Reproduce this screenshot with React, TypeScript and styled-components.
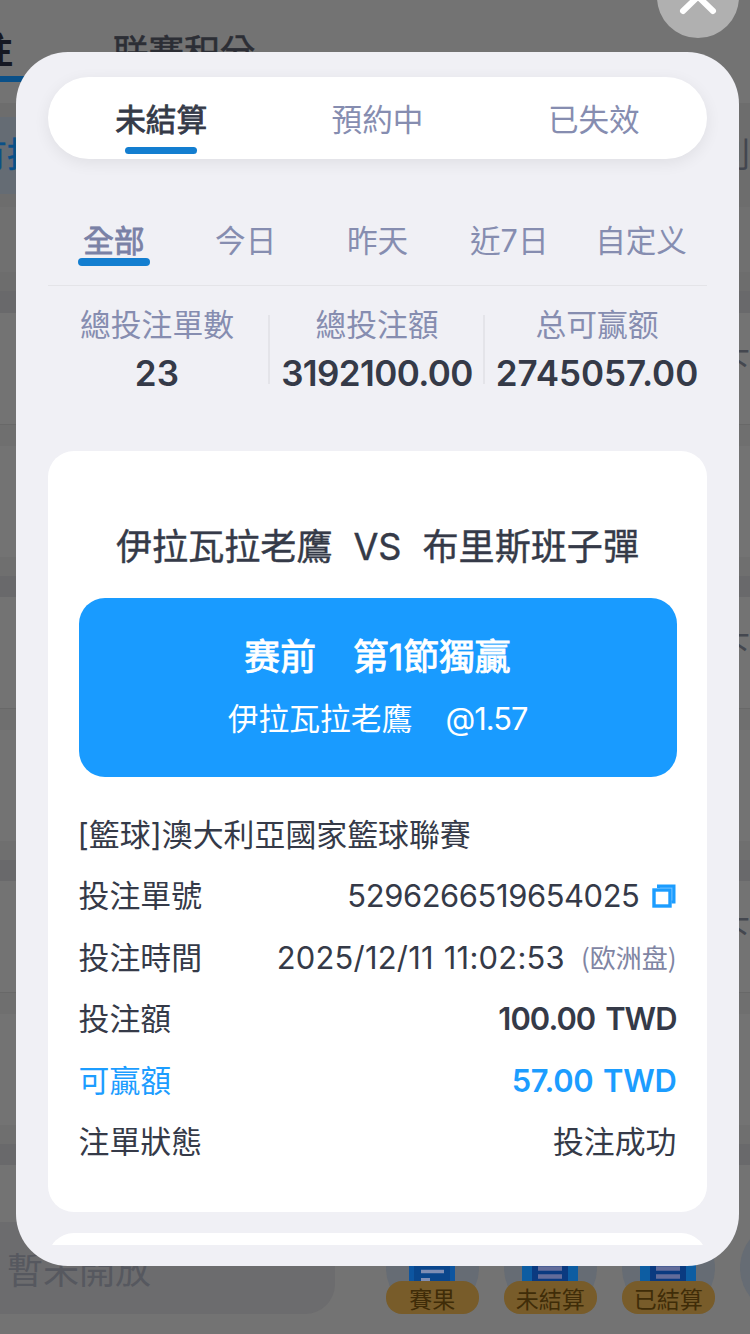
import React from "react";
import styled, { createGlobalStyle } from "styled-components";

const Global = createGlobalStyle`
  * { box-sizing: border-box; }
  html, body { margin: 0; padding: 0; }
  body {
    width: 750px;
    height: 1334px;
    overflow: hidden;
    background: #737373;
    font-family: Inter, "Noto Sans CJK TC", sans-serif;
    color: #353a48;
  }
`;

const Screen = styled.div`
  position: relative;
  width: 750px;
  height: 1334px;
  overflow: hidden;
`;

/* ---------- dimmed page ---------- */

const Backdrop = styled.div`
  display: flex;
  flex-direction: column;
  width: 750px;
  height: 1334px;
  background: #737373;
`;

const PageTabs = styled.div`
  display: flex;
  gap: 83px;
  height: 103px;
  padding-top: 25px;
  margin-left: -59px;
  flex: none;
`;

const PageTab = styled.div<{ $active?: boolean }>`
  width: ${(p) => (p.$active ? "89px" : "auto")};
  height: 57px;
  padding-top: ${(p) => (p.$active ? 1 : 3)}px;
  font-size: ${(p) => (p.$active ? 36 : 35.6)}px;
  line-height: 50px;
  font-weight: ${(p) => (p.$active ? 700 : 400)};
  color: ${(p) => (p.$active ? "#161822" : "#2c2e35")};
  -webkit-text-stroke: ${(p) => (p.$active ? "0" : "0.6px #2c2e35")};
  border-bottom: ${(p) => (p.$active ? "6px solid #0a5088" : "0")};
`;

const ChipBar = styled.div`
  display: flex;
  justify-content: space-between;
  height: 104px;
  padding: 14px 0 13px;
  background: #6d6d6d;
  flex: none;
`;

const Chip = styled.div<{ $active?: boolean }>`
  width: 120px;
  padding-left: ${(p) => (p.$active ? 0 : 86)}px;
  background: ${(p) => (p.$active ? "#656c74" : "transparent")};
  color: ${(p) => (p.$active ? "#0a5088" : "#43464f")};
  font-size: 34px;
  line-height: 76px;
  white-space: nowrap;
  overflow: hidden;
  -webkit-text-stroke: ${(p) => (p.$active ? "0.5px #0a5088" : "0")};
`;

const ChipText = styled.span`
  display: block;
  margin-left: -27px;
`;

const Strip = styled.div<{ $h: number; $c: string }>`
  height: ${(p) => p.$h}px;
  background: ${(p) => p.$c};
  flex: none;
`;

const LeagueCard = styled.div`
  display: flex;
  flex-direction: column;
  height: 263px;
  flex: none;
`;

const OddsRow = styled.div`
  height: 111px;
  padding: 31px 0 0;
  font-size: 32px;
  line-height: 40px;
  text-align: right;
  color: #44474f;
`;

const Footer = styled.div`
  display: flex;
  align-items: flex-start;
  height: 112px;
  margin-top: auto;
  flex: none;
`;

const ClosedInput = styled.div`
  width: 335px;
  height: 92px;
  border-radius: 0 30px 30px 0;
  background: #6c6c6e;
  color: #56585f;
  font-size: 36px;
  line-height: 98px;
  padding-left: 7px;
`;

const Shortcuts = styled.div`
  display: flex;
  gap: 25.5px;
  padding-left: 51px;
  width: 415px;
  overflow: hidden;
`;

const Shortcut = styled.div`
  display: flex;
  flex-direction: column;
  align-items: center;
  justify-content: flex-end;
  width: 92.5px;
  height: 92px;
  flex: none;
  border-radius: 46px;
  background: #666c74;
`;

const ShortcutLabel = styled.div`
  width: 92.5px;
  height: 33px;
  border-radius: 16px;
  background: #785c2a;
  color: #3f2c08;
  font-size: 23px;
  line-height: 38px;
  text-align: center;
`;

/* ---------- dialog ---------- */

const CloseButton = styled.button`
  position: absolute;
  left: 657px;
  top: -44px;
  width: 82px;
  height: 82px;
  border: 0;
  padding: 0;
  border-radius: 50%;
  background: #b0b0b0;
`;

const Dialog = styled.section`
  position: absolute;
  left: 16px;
  top: 52px;
  width: 723px;
  height: 1214px;
  display: flex;
  flex-direction: column;
  padding: 25px 32px 21px;
  border-radius: 52px;
  background: #f0f0f5;
`;

const StatusTabs = styled.div`
  display: flex;
  height: 82px;
  padding: 16px 5px 0;
  flex: none;
  border-radius: 41px;
  background: #fff;
  box-shadow: 0 4px 16px rgba(0, 0, 0, 0.07);
`;

const Tab = styled.div<{ $active?: boolean; $color: string; $lh: number }>`
  flex: 1;
  display: flex;
  flex-direction: column;
  align-items: center;
  font-size: 30.6px;
  color: ${(p) => p.$color};
  -webkit-text-stroke: ${(p) => (p.$active ? `0.8px ${p.$color}` : "0")};

  > span {
    height: ${(p) => p.$lh}px;
    line-height: ${(p) => p.$lh}px;
  }
`;

const Underline = styled.i<{ $h: number }>`
  width: 72px;
  height: ${(p) => p.$h}px;
  border-radius: 4px;
  background: #137ed0;
`;

const DateTabs = styled.div`
  display: flex;
  height: 127px;
  padding-top: 63px;
  flex: none;
  border-bottom: 1px solid #e4e4e8;

  span {
    margin-bottom: -1px;
  }
`;

const Totals = styled.div`
  display: flex;
  height: 165px;
  padding-top: 18px;
  flex: none;
`;

const Total = styled.div<{ $w: number; $pl: number; $pr: number }>`
  display: flex;
  flex-direction: column;
  align-items: center;
  width: ${(p) => p.$w}px;
  padding: 0 ${(p) => p.$pr}px 0 ${(p) => p.$pl}px;
  flex: none;
`;

const Divider = styled.i`
  width: 2px;
  height: 69px;
  margin: 11px -1px 0;
  background: #e4e4e9;
`;

const TotalLabel = styled.div`
  font-size: 30.8px;
  line-height: 42px;
  white-space: nowrap;
  color: #868db0;
`;

const TotalValue = styled.div<{ $ls: number }>`
  font-size: 35px;
  line-height: 44px;
  margin-top: 5px;
  font-weight: 600;
  white-space: nowrap;
  letter-spacing: ${(p) => p.$ls}px;
`;

const BetList = styled.div`
  display: flex;
  flex-direction: column;
  gap: 21px;
  flex: 1;
  min-height: 0;
  overflow: hidden;
`;

const BetCard = styled.article`
  height: 761px;
  flex: none;
  padding: 71px 30.5px 0;
  border-radius: 26px;
  background: #fff;
`;

const Match = styled.h2`
  display: flex;
  justify-content: center;
  gap: 21px;
  margin: 0;
  font-size: 36.1px;
  line-height: 50px;
  font-weight: 400;
  white-space: nowrap;
  -webkit-text-stroke: 0.4px #353a48;
`;

const Pick = styled.div`
  height: 179px;
  margin-top: 26px;
  padding-top: 34px;
  border-radius: 26px;
  background: #199bff;
  color: #fff;
`;

const PickTitle = styled.div`
  display: flex;
  justify-content: center;
  gap: 37px;
  font-size: 35.8px;
  line-height: 50px;
  -webkit-text-stroke: 0.9px #fff;
`;

const PickDetail = styled.div`
  display: flex;
  justify-content: center;
  gap: 33px;
  margin-top: 15px;
  font-size: 30.8px;
  line-height: 44px;
`;

const Odds = styled.span`
  letter-spacing: -1px;
`;

const Details = styled.div`
  margin-top: 27px;
`;

const Row = styled.div<{ $accent?: boolean }>`
  display: flex;
  align-items: center;
  justify-content: space-between;
  height: 61.5px;
  font-size: 30.9px;
  line-height: 44px;
  white-space: nowrap;
  color: ${(p) => (p.$accent ? "#1c9dff" : "#353a48")};
`;

const League = styled.span`
  margin-left: -1px;
`;

const Value = styled.span<{ $strong?: boolean; $ls?: number; $ws?: number }>`
  display: flex;
  align-items: center;
  font-weight: ${(p) => (p.$strong ? 600 : 400)};
  letter-spacing: ${(p) => p.$ls ?? 0}px;
  word-spacing: ${(p) => p.$ws ?? 0}px;
`;

const Market = styled.span`
  margin-left: 16px;
  font-size: 26px;
  line-height: 42px;
  padding-bottom: 2px;
  font-family: "Noto Sans CJK SC", sans-serif;
  letter-spacing: 0;
  color: #7f85a3;
`;

const CopyIcon = styled.svg`
  margin: 0 1px 0 12px;
`;

const status = ["未結算", "預約中", "已失效"];
const dates = ["全部", "今日", "昨天", "近7日", "自定义"];
const totals = [
  { label: "總投注單數", value: "23", width: 221, pl: 0, pr: 3, ls: 0.3 },
  { label: "總投注額", value: "3192100.00", width: 215, pl: 1, pr: 0, ls: -0.6 },
  { label: "总可赢额", value: "2745057.00", width: 223, pl: 3, pr: 0, ls: 0 },
];

const ResultIcon = () => (
  <svg width="46" height="59" viewBox="0 0 46 59">
    <rect y="4" width="46" height="55" fill="#0d55a0" />
    <rect x="5" y="4" width="36" height="55" fill="#0a468c" />
    <path d="M12 49.500H35" stroke="#7f8eb4" strokeWidth="3.500" />
    <path d="M12 57.500H21" stroke="#7f8eb4" strokeWidth="3" />
  </svg>
);

const ListIcon = () => (
  <svg width="56" height="59" viewBox="0 0 56 59">
    <rect y="4" width="56" height="55" fill="#0d5da2" />
    <rect x="10" y="4" width="36" height="55" fill="#0a3a80" />
    <path d="M16 46.500H40M16 54.500H40" stroke="#626c9a" strokeWidth="4.500" />
  </svg>
);

export default function App() {
  return (
    <Screen>
      <Global />
      <Backdrop>
        <PageTabs>
          <PageTab $active>投注</PageTab>
          <PageTab>联赛积分</PageTab>
        </PageTabs>
        <ChipBar>
          <Chip $active>
            <ChipText>有投注</ChipText>
          </Chip>
          <Chip>則</Chip>
        </ChipBar>
        <Strip $h={65} $c="#707070" />
        <Strip $h={19} $c="#6d6d6d" />
        <Strip $h={22} $c="#69696b" />
        {[0, 1, 2].map((i) => (
          <React.Fragment key={i}>
            <LeagueCard>
              <OddsRow>下</OddsRow>
              <Strip $h={1} $c="#686868" />
              <Strip $h={21} $c="#6f6f6f" />
              <Strip $h={111} $c="#737373" />
              <Strip $h={19} $c="#6f6f6f" />
            </LeagueCard>
            <Strip $h={21} $c="#69696b" />
          </React.Fragment>
        ))}
        <Footer>
          <ClosedInput>暫未開放</ClosedInput>
          <Shortcuts>
            <Shortcut>
              <ResultIcon />
              <ShortcutLabel>賽果</ShortcutLabel>
            </Shortcut>
            <Shortcut>
              <ListIcon />
              <ShortcutLabel>未結算</ShortcutLabel>
            </Shortcut>
            <Shortcut>
              <ListIcon />
              <ShortcutLabel>已結算</ShortcutLabel>
            </Shortcut>
            <Shortcut />
          </Shortcuts>
        </Footer>
      </Backdrop>

      <CloseButton aria-label="close">
        <svg width="82" height="82" viewBox="0 0 82 82">
          <path
            d="M26 26L56 55M56 26L26 55"
            fill="none"
            stroke="#fff"
            strokeWidth="6"
            strokeLinecap="round"
          />
        </svg>
      </CloseButton>

      <Dialog>
        <StatusTabs>
          {status.map((s, i) => (
            <Tab key={s} $active={i === 0} $color={i === 0 ? "#353a48" : "#868db0"} $lh={54}>
              <span>{s}</span>
              {i === 0 && <Underline $h={7} />}
            </Tab>
          ))}
        </StatusTabs>
        <DateTabs>
          {dates.map((d, i) => (
            <Tab key={d} $active={i === 0} $color={i === 0 ? "#7a81a6" : "#868db0"} $lh={37}>
              <span>{d}</span>
              {i === 0 && <Underline $h={8} />}
            </Tab>
          ))}
        </DateTabs>
        <Totals>
          {totals.map((t, i) => (
            <React.Fragment key={t.label}>
              {i > 0 && <Divider />}
              <Total $w={t.width} $pl={t.pl} $pr={t.pr}>
                <TotalLabel>{t.label}</TotalLabel>
                <TotalValue $ls={t.ls}>{t.value}</TotalValue>
              </Total>
            </React.Fragment>
          ))}
        </Totals>
        <BetList>
          <BetCard>
            <Match>
              <span>伊拉瓦拉老鷹</span>
              <span>VS</span>
              <span>布里斯班子彈</span>
            </Match>
            <Pick>
              <PickTitle>
                <span>赛前</span>
                <span>第1節獨贏</span>
              </PickTitle>
              <PickDetail>
                <span>伊拉瓦拉老鷹</span>
                <Odds>@1.57</Odds>
              </PickDetail>
            </Pick>
            <Details>
              <Row>
                <League>[籃球]澳大利亞國家籃球聯賽</League>
              </Row>
              <Row>
                <span>投注單號</span>
                <Value $ls={-0.4}>
                  5296266519654025
                  <CopyIcon width="24" height="24" viewBox="0 0 24 24" fill="none" stroke="#1c9dff">
                    <rect x="2" y="6" width="16" height="16" strokeWidth="3.400" />
                    <path d="M6.500 4V2H22V18H19.500" strokeWidth="3" />
                    <path d="M6.500 3.500H20.500V18" strokeWidth="1.500" opacity="0.7" />
                  </CopyIcon>
                </Value>
              </Row>
              <Row>
                <span>投注時間</span>
                <Value $ls={0.25} $ws={1}>
                  2025/12/11 11:02:53
                  <Market>(欧洲盘)</Market>
                </Value>
              </Row>
              <Row>
                <span>投注額</span>
                <Value $strong $ls={-0.95} $ws={3}>100.00 TWD</Value>
              </Row>
              <Row $accent>
                <span>可贏額</span>
                <Value $strong $ls={-0.25} $ws={2}>57.00 TWD</Value>
              </Row>
              <Row>
                <span>注單狀態</span>
                <Value>投注成功</Value>
              </Row>
            </Details>
          </BetCard>
          <BetCard />
        </BetList>
      </Dialog>
    </Screen>
  );
}
